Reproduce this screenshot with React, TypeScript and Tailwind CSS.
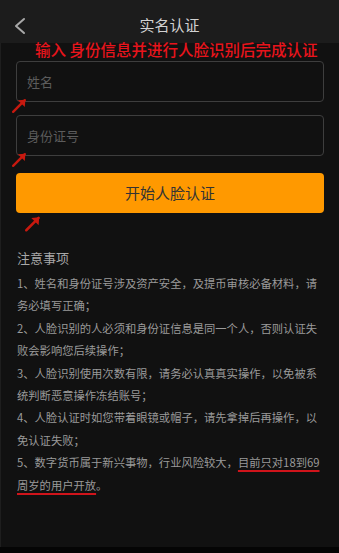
import React from 'react';

const Arrow: React.FC<{ className: string }> = ({ className }) => (
  <svg className={className} viewBox="0 0 16 16" fill="none">
    <path d="M2 14 L13 3" stroke="#c8190f" strokeWidth="2.2" strokeLinecap="round" />
    <path d="M6.5 3 L13.5 2.5 L13 9.5 Z" fill="#c8190f" />
  </svg>
);

const notes = [
  '1、姓名和身份证号涉及资产安全，及提币审核必备材料，请务必填写正确；',
  '2、人脸识别的人必须和身份证信息是同一个人，否则认证失败会影响您后续操作；',
  '3、人脸识别使用次数有限，请务必认真真实操作，以免被系统判断恶意操作冻结账号；',
  '4、人脸认证时如您带着眼镜或帽子，请先拿掉后再操作，以免认证失败；',
];

const App: React.FC = () => {
  return (
    <div
      className="relative w-[339px] h-[553px] flex flex-col bg-[#111111] overflow-hidden"
      style={{ fontFamily: '"Noto Sans CJK SC", "Noto Sans", sans-serif' }}
    >
      {/* Header */}
      <div className="relative h-[43px] shrink-0 bg-[#1c1c1c] flex items-center justify-center pt-[5px]">
        <svg className="absolute left-[13px] top-[17px] w-[14px] h-[18px]" viewBox="0 0 14 18" fill="none">
          <path d="M11 2 L3 9 L11 16" stroke="#a8a8a8" strokeWidth="2" strokeLinecap="round" strokeLinejoin="round" />
        </svg>
        <span className="text-[15px] text-[#d2d2d2] leading-none">实名认证</span>
      </div>

      {/* annotation */}
      <div className="absolute left-[35px] top-[40px] text-[15.5px] leading-[18px] text-[#e8141c] font-medium whitespace-nowrap">
        输入 身份信息并进行人脸识别后完成认证
      </div>

      {/* Body */}
      <div className="flex-1 flex flex-col px-[15px] pt-[18px] border-l border-[#1e1e1e]">
        <div className="h-[41px] border border-[#3e3e3e] rounded-[4px] px-[10px] flex items-center text-[13px] text-[#5c5c5c]">
          姓名
        </div>
        <div className="mt-[13px] h-[41px] border border-[#3e3e3e] rounded-[4px] px-[10px] flex items-center text-[13px] text-[#5c5c5c]">
          身份证号
        </div>
        <div className="mt-[17px] h-[40px] bg-[#ff9900] rounded-[4px] flex items-center justify-center text-[15px] text-[#333333]">
          开始人脸认证
        </div>

        <div className="mt-[35px] pl-[1px] -mr-[2px]">
          <div className="text-[13px] leading-[20px] text-[#a8a8a8]">注意事项</div>
          <div className="mt-[4px] text-[11.3px] leading-[22.4px] text-[#9a9a9a]">
            {notes.map((n) => (
              <p key={n}>{n}</p>
            ))}
            <p>
              5、数字货币属于新兴事物，行业风险较大，
              <span className="underline decoration-[#d0141b] decoration-2 underline-offset-[3px]">
                目前只对18到69周岁的用户开放
              </span>
              。
            </p>
          </div>
        </div>
      </div>

      <div className="h-[6px] shrink-0 bg-[#050505]" />

      {/* arrows */}
      <Arrow className="absolute left-[11px] top-[97px] w-[17px] h-[17px]" />
      <Arrow className="absolute left-[11px] top-[151px] w-[17px] h-[17px]" />
      <Arrow className="absolute left-[24px] top-[214px] w-[18px] h-[19px]" />
    </div>
  );
};

export default App;
